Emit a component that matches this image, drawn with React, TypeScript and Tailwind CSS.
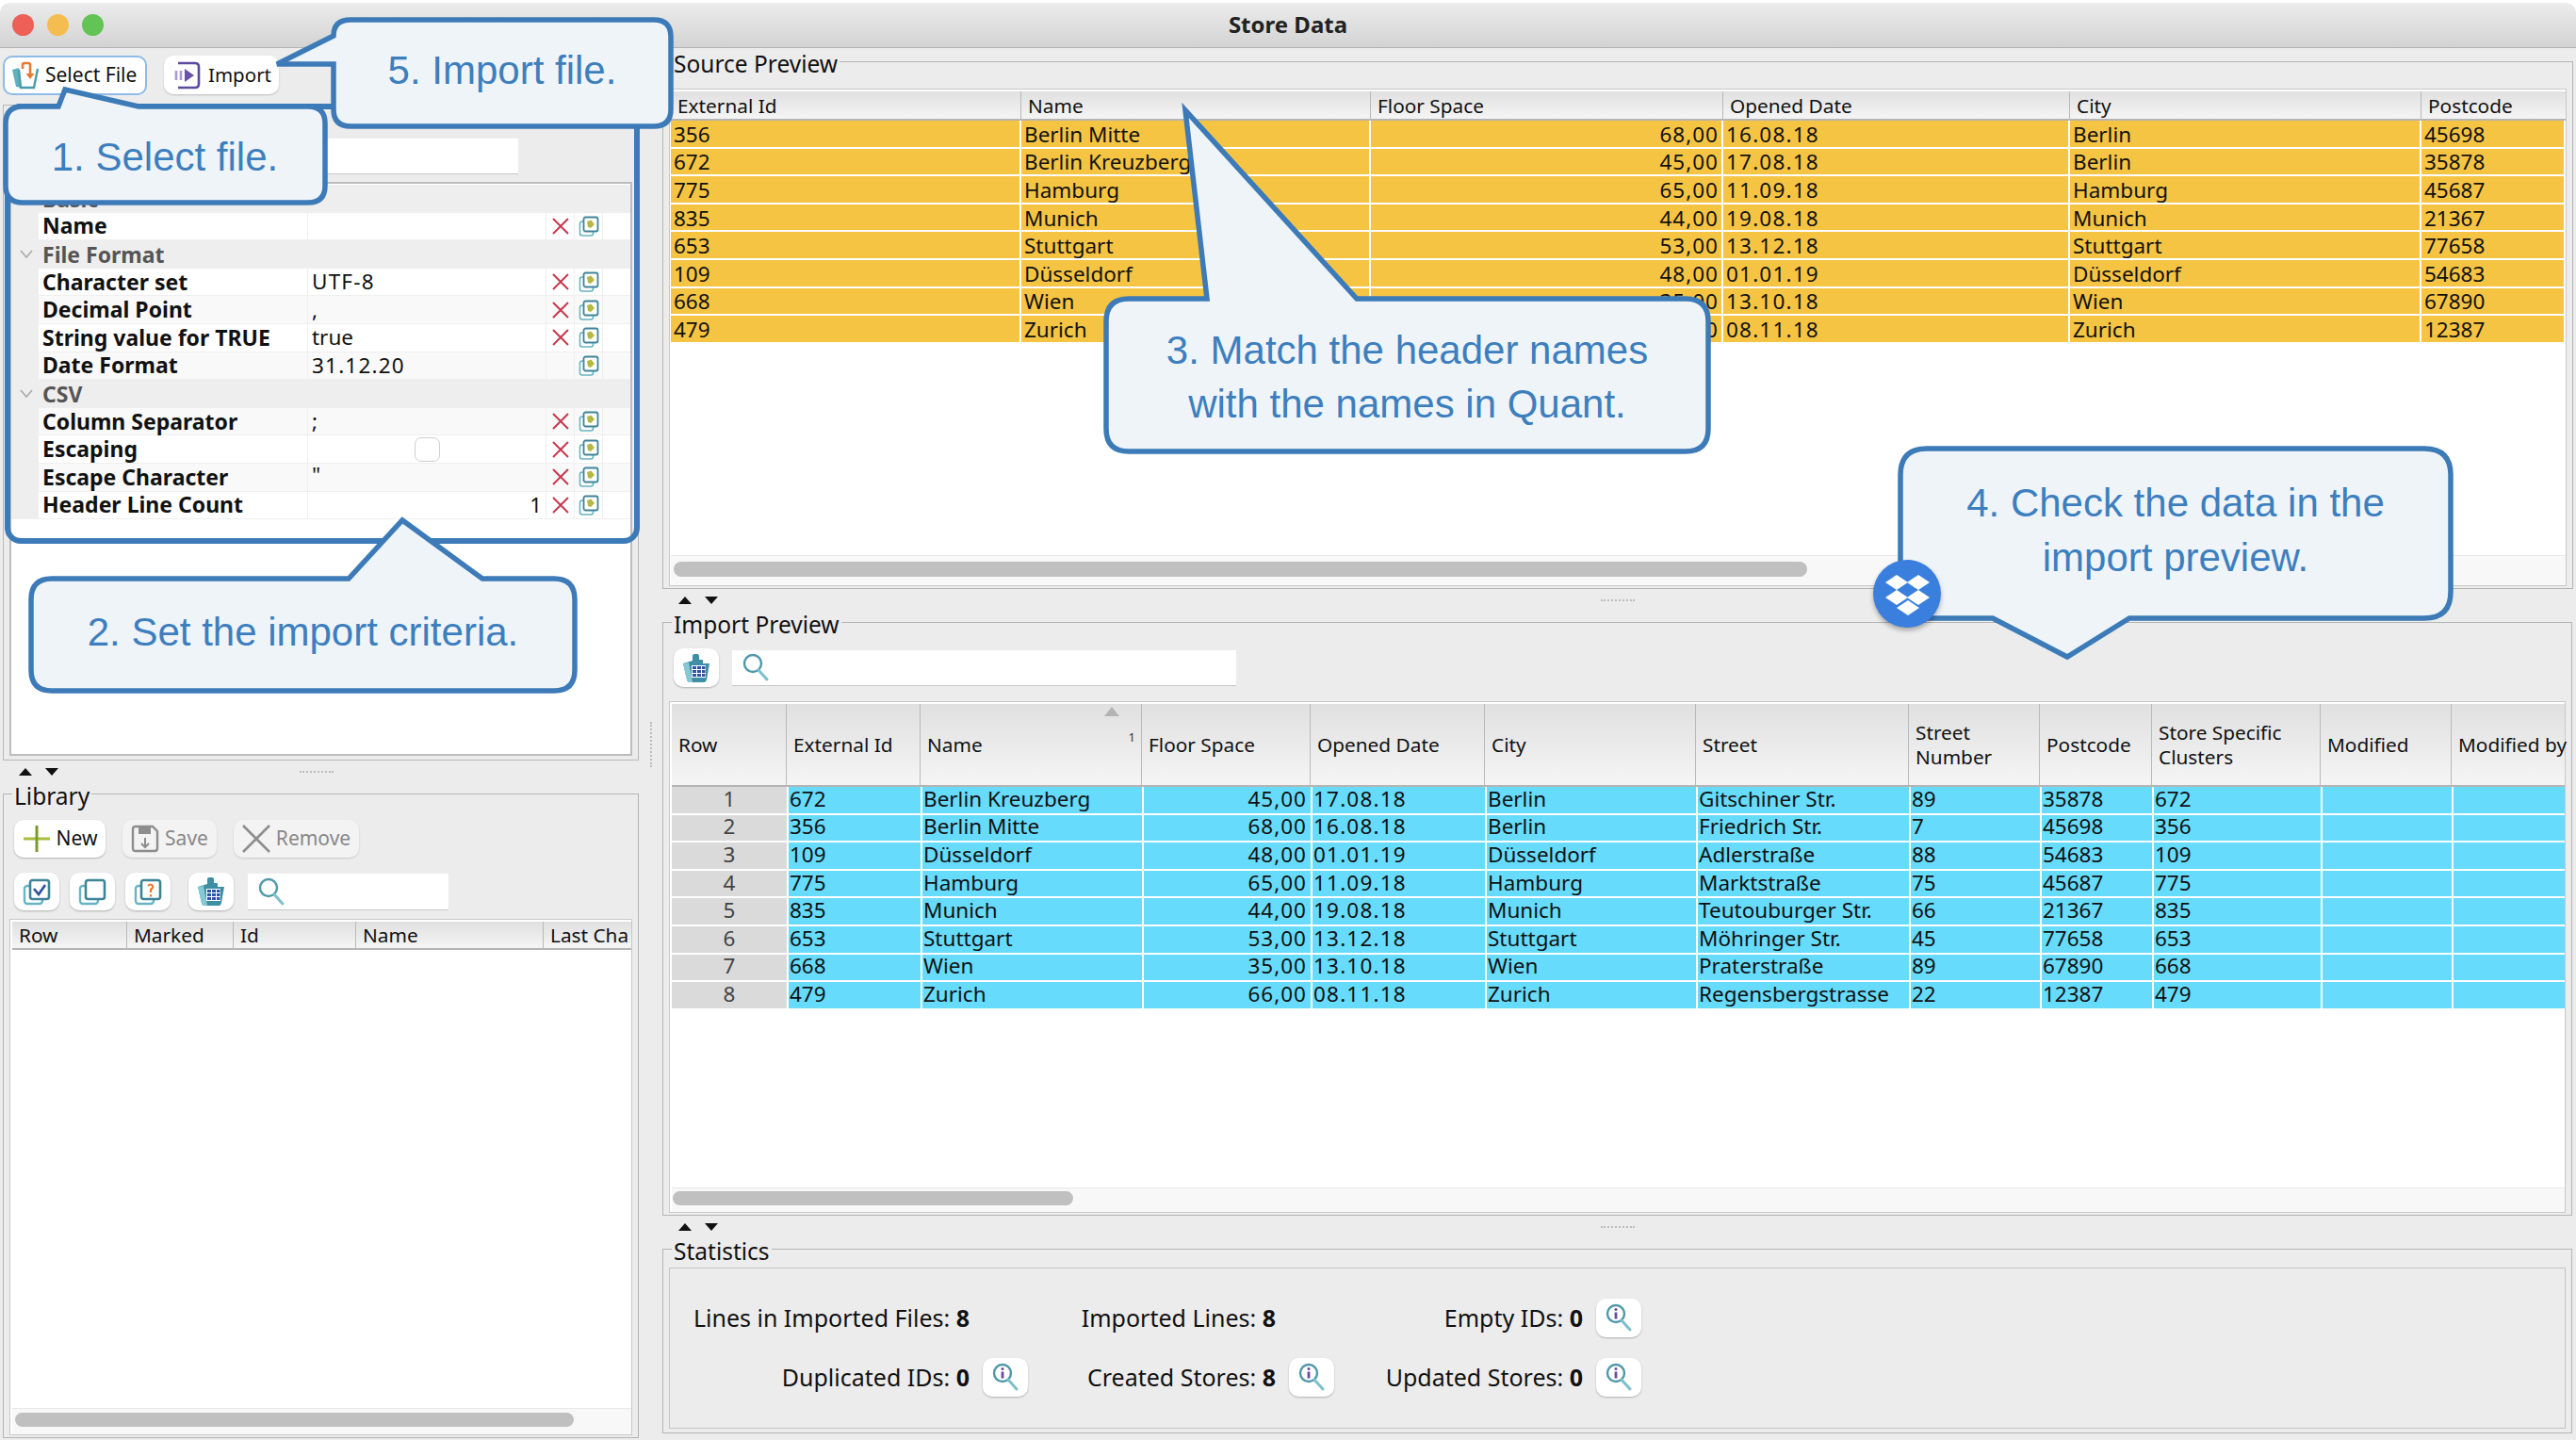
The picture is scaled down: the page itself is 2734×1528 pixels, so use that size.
import type { ReactNode } from "react";

const srcCols = "grid grid-cols-[372px_371px_374px_368px_373px_153px]";
const impCols = "grid grid-cols-[122px_142px_235px_179px_185px_224px_226px_139px_119px_179px_139px_120px]";
const libCols = "grid grid-cols-[122px_113px_130px_199px_92px]";
const headBg = "bg-gradient-to-b from-[#e0e0e0] to-[#f5f5f5]";

const sourceRows = [
  ["356", "Berlin Mitte", "68,00", "16.08.18", "Berlin", "45698"],
  ["672", "Berlin Kreuzberg", "45,00", "17.08.18", "Berlin", "35878"],
  ["775", "Hamburg", "65,00", "11.09.18", "Hamburg", "45687"],
  ["835", "Munich", "44,00", "19.08.18", "Munich", "21367"],
  ["653", "Stuttgart", "53,00", "13.12.18", "Stuttgart", "77658"],
  ["109", "Düsseldorf", "48,00", "01.01.19", "Düsseldorf", "54683"],
  ["668", "Wien", "35,00", "13.10.18", "Wien", "67890"],
  ["479", "Zurich", "66,00", "08.11.18", "Zurich", "12387"],
];

const importRows = [
  ["672", "Berlin Kreuzberg", "45,00", "17.08.18", "Berlin", "Gitschiner Str.", "89", "35878", "672"],
  ["356", "Berlin Mitte", "68,00", "16.08.18", "Berlin", "Friedrich Str.", "7", "45698", "356"],
  ["109", "Düsseldorf", "48,00", "01.01.19", "Düsseldorf", "Adlerstraße", "88", "54683", "109"],
  ["775", "Hamburg", "65,00", "11.09.18", "Hamburg", "Marktstraße", "75", "45687", "775"],
  ["835", "Munich", "44,00", "19.08.18", "Munich", "Teutouburger Str.", "66", "21367", "835"],
  ["653", "Stuttgart", "53,00", "13.12.18", "Stuttgart", "Möhringer Str.", "45", "77658", "653"],
  ["668", "Wien", "35,00", "13.10.18", "Wien", "Praterstraße", "89", "67890", "668"],
  ["479", "Zurich", "66,00", "08.11.18", "Zurich", "Regensbergstrasse", "22", "12387", "479"],
];

type Prop = { group?: boolean; label: string; value?: string; noX?: boolean; check?: boolean; right?: boolean; top?: boolean; wide?: boolean };

const props: Prop[] = [
  { group: true, label: "Basic" },
  { label: "Name" },
  { group: true, label: "File Format" },
  { label: "Character set", value: "UTF-8", wide: true },
  { label: "Decimal Point", value: "," },
  { label: "String value for TRUE", value: "true" },
  { label: "Date Format", value: "31.12.20", noX: true, wide: true },
  { group: true, label: "CSV" },
  { label: "Column Separator", value: ";" },
  { label: "Escaping", check: true },
  { label: "Escape Character", value: '"', top: true },
  { label: "Header Line Count", value: "1", right: true },
];

function Stack({ children }: { children?: ReactNode }) {
  return (
    <svg viewBox="0 0 30 30" className="h-[30px] w-[30px]" fill="none">
      <rect x="2" y="9" width="19" height="19" rx="3" stroke="#68b4c2" strokeWidth="2.4" fill="#fff" />
      <rect x="8" y="3" width="20" height="20" rx="2.5" stroke="#3f8397" strokeWidth="2.6" fill="#fff" />
      {children}
    </svg>
  );
}

function TableBag() {
  return (
    <svg viewBox="0 0 30 32" className="h-[32px] w-[30px]">
      <path d="M1 11 L11 8 V3 q0-2 2-2 h3 q2 0 2 2 V7 h3 q1 0 1 1 v3 h7 l-3 17 q-.5 3-3 3 H8 q-2.5 0-3-3 Z" fill="#3f8fa4" />
      <path d="M1 11 L7 10 L11 31 H8 q-2.5 0-3-3 Z" fill="#86c9d4" />
      <path d="M10 13 h15 v13 h-15 Z" fill="#fff" />
      <path d="M11 14 h4 v3 h-4 Z M16 14 h4 v3 h-4 Z M21 14 h3.5 v3 h-3.5 Z M11 18 h4 v3 h-4 Z M16 18 h4 v3 h-4 Z M21 18 h3.5 v3 h-3.5 Z M11 22 h4 v3 h-4 Z M16 22 h4 v3 h-4 Z M21 22 h3.5 v3 h-3.5 Z" fill="#2e55a5" />
    </svg>
  );
}

function Magnifier({ info }: { info?: boolean }) {
  return (
    <svg viewBox="0 0 30 30" className="h-[30px] w-[30px]" fill="none">
      <circle cx="12" cy="11" r="9" stroke="#4f98aa" strokeWidth="2.4" />
      <path d="M18 18 L27 28" stroke="#7dbfcb" strokeWidth="3" strokeLinecap="round" />
      {info && (
        <>
          <circle cx="12" cy="6.5" r="1.5" fill="#6a4a9c" />
          <rect x="10.6" y="9.5" width="2.8" height="7" fill="#6a4a9c" />
        </>
      )}
    </svg>
  );
}

function SmallCopy() {
  return (
    <svg viewBox="0 0 22 22" className="h-[22px] w-[22px]" fill="none">
      <rect x="1.5" y="6" width="14" height="15" rx="2.5" stroke="#68b4c2" strokeWidth="1.6" fill="#fff" />
      <rect x="5.5" y="1.5" width="15" height="15" rx="2" stroke="#3f8397" strokeWidth="1.8" fill="#fff" />
      <path d="M9 6 L15 4 L17 9 L13 13 L10 12 Z" fill="#b5b844" />
      <path d="M13 4 h4 v5 Z" fill="#fff" />
    </svg>
  );
}

function RedX() {
  return (
    <svg viewBox="0 0 18 18" className="h-[18px] w-[18px]" fill="none">
      <path d="M1 1 L17 17 M17 1 L1 17" stroke="#c8384d" strokeWidth="2" />
    </svg>
  );
}

function IconButton({ children, className = "" }: { children: ReactNode; className?: string }) {
  return (
    <button className={`flex h-[40px] w-[48px] shrink-0 items-center justify-center rounded-[10px] bg-white shadow-[0_1px_2px_rgba(0,0,0,0.25)] ${className}`}>
      {children}
    </button>
  );
}

function SplitHandle({ dots }: { dots: string }) {
  return (
    <div className="flex h-[23px] items-center">
      <svg viewBox="0 0 44 10" className="ml-[17px] h-[10px] w-[44px]">
        <polygon points="0,9 7,1 14,9" fill="#111" />
        <polygon points="28,1 42,1 35,9" fill="#111" />
      </svg>
      <span className={`h-[2px] border-t-2 border-dotted border-[#bcbcbc] ${dots}`} />
    </div>
  );
}

function Legend({ children }: { children: ReactNode }) {
  return <legend className="ml-[3px] h-[24px] translate-y-[3px] px-[2px] text-[24.5px] leading-[24px] text-[#111]">{children}</legend>;
}

function HeadCell({ children, last }: { children?: ReactNode; last?: boolean }) {
  return (
    <div className={`flex items-center whitespace-nowrap px-[7px] ${last ? "" : "border-r border-[#b9b9b9]"}`}>{children}</div>
  );
}

function PropertyRow({ p, i }: { p: Prop; i: number }) {
  if (p.group) {
    return (
      <div className="flex h-[29.6px] items-center bg-[#eeeeee] text-[23px] font-bold leading-[24px] text-[#555]">
        <svg viewBox="0 0 14 10" className="ml-[9px] mr-[10px] h-[10px] w-[14px]" fill="none">
          <path d="M1 1 L7 8 L13 1" stroke="#a8a8a8" strokeWidth="1.6" />
        </svg>
        {p.label}
      </div>
    );
  }
  return (
    <div className={`grid h-[29.6px] grid-cols-[29px_286px_253px_30px_30px_28px] border-b border-[#efefef] leading-[24px] ${i % 2 ? "bg-white" : "bg-[#f9f9f9]"}`}>
      <div className="bg-[#eeeeee]" />
      <div className="flex items-center whitespace-nowrap border-r border-[#eeeeee] pb-[1px] pl-[4px] text-[23px] font-bold text-[#111]">{p.label}</div>
      <div className={`flex border-r border-[#eeeeee] px-[4px] text-[#111] ${p.top ? "items-start" : "items-center"} ${p.right ? "justify-end" : ""} ${p.check ? "justify-center" : ""} ${p.wide ? "tracking-[1.2px]" : ""}`}>
        {p.check ? <span className="h-[26px] w-[27px] rounded-[7px] border border-[#cfcfcf] bg-white" /> : p.value}
      </div>
      <div className="flex items-center justify-center border-r border-[#eeeeee]">{!p.noX && <RedX />}</div>
      <div className="flex items-center justify-center border-r border-[#eeeeee]">
        <SmallCopy />
      </div>
    </div>
  );
}

function Stat({ label, value, info }: { label: string; value: string; info?: boolean }) {
  return (
    <div className="flex h-[41px] items-center justify-end gap-[14px]">
      <span className="whitespace-nowrap text-[25px] leading-[30px] text-[#111]">
        {label}: <b>{value}</b>
      </span>
      {info ? (
        <IconButton className="h-[41px]">
          <Magnifier info />
        </IconButton>
      ) : (
        <span className="w-[48px]" />
      )}
    </div>
  );
}

function Callouts() {
  return (
    <>
      <svg viewBox="0 0 2734 1528" className="pointer-events-none absolute left-0 top-0 h-[1528px] w-[2734px]" fill="none" strokeLinejoin="miter">
        <rect x="8" y="113" width="668" height="461" rx="14" stroke="#3c7ab8" strokeWidth="6" />
        <g fill="#eff4f9" stroke="#3c7ab8" strokeWidth="5.5">
          <path d="M24 113 H62 L69 95 L147 113 H327 Q345 113 345 131 V197 Q345 215 327 215 H24 Q6 215 6 197 V131 Q6 113 24 113 Z" />
          <path d="M372 21 H694 Q712 21 712 39 V116 Q712 134 694 134 H372 Q354 134 354 116 V68 H294 L354 38 Q354 21 372 21 Z" />
          <path d="M55 614 H370 L427 552 L512 614 H588 Q610 614 610 636 V711 Q610 733 588 733 H55 Q33 733 33 711 V636 Q33 614 55 614 Z" />
          <path d="M1198 317 H1281 L1258 117 L1440 317 H1789 Q1813 317 1813 341 V455 Q1813 479 1789 479 H1198 Q1174 479 1174 455 V341 Q1174 317 1198 317 Z" />
          <path d="M2045 476 H2573 Q2601 476 2601 504 V628 Q2601 656 2573 656 H2260 L2194 697 L2115 656 H2045 Q2017 656 2017 628 V504 Q2017 476 2045 476 Z" />
        </g>
      </svg>
      <div className="absolute left-[5px] top-[115px] flex h-[103px] w-[340px] items-center justify-center text-[42px] text-[#3d7fbe] font-['Liberation_Sans',sans-serif]">1. Select file.</div>
      <div className="absolute left-[354px] top-[18px] flex h-[113px] w-[358px] items-center justify-center text-[42px] text-[#3d7fbe] font-['Liberation_Sans',sans-serif]">5. Import file.</div>
      <div className="absolute left-[33px] top-[610px] flex h-[120px] w-[577px] items-center justify-center text-[42px] text-[#3d7fbe] font-['Liberation_Sans',sans-serif]">2. Set the import criteria.</div>
      <div className="absolute left-[1174px] top-[315px] flex h-[170px] w-[639px] items-center justify-center text-center text-[42px] leading-[57px] text-[#3d7fbe] font-['Liberation_Sans',sans-serif]">
        3. Match the header names
        <br />
        with the names in Quant.
      </div>
      <div className="absolute left-[2017px] top-[474px] flex h-[178px] w-[584px] items-center justify-center text-center text-[42px] leading-[58px] text-[#3d7fbe] font-['Liberation_Sans',sans-serif]">
        4. Check the data in the
        <br />
        import preview.
      </div>
      <div className="absolute left-[1988px] top-[594px] flex h-[72px] w-[72px] items-center justify-center rounded-full bg-[#3a7fde] shadow-[0_3px_5px_rgba(0,0,0,0.3)]">
        <svg viewBox="-24 -24 48 48" className="h-[48px] w-[48px]" fill="#fff">
          <polygon points="-23,-12 -11,-20 1,-12 -11,-4" />
          <polygon points="0,-12 12,-20 24,-12 12,-4" />
          <polygon points="-23,4 -11,-4 1,4 -11,12" />
          <polygon points="0,4 12,-4 24,4 12,12" />
          <polygon points="-11,15 1,7 13,15 1,23" />
        </svg>
      </div>
    </>
  );
}

export default function App() {
  return (
    <div className="relative h-[1528px] w-[2734px] overflow-hidden bg-white pt-[3px] text-[22.5px] font-['Noto_Sans',sans-serif]">
      <header className="grid h-[48px] grid-cols-[1fr_auto_1fr] items-center rounded-t-[10px] border-b border-[#b4b4b4] bg-gradient-to-b from-[#ececec] to-[#d3d3d3]">
        <div className="flex gap-[14px] pl-[13px]">
          <span className="h-[23px] w-[23px] rounded-full bg-[#ed5f57]" />
          <span className="h-[23px] w-[23px] rounded-full bg-[#f5bd4f]" />
          <span className="h-[23px] w-[23px] rounded-full bg-[#61c454]" />
        </div>
        <div className="pb-[2px] text-[24px] font-bold text-[#222]">Store Data</div>
        <div />
      </header>

      <main className="flex h-[1477px] bg-[#ececec]">
        {/* left side */}
        <div className="ml-[3px] w-[675px] shrink-0">
          <div className="flex h-[60px] items-start gap-[18px] pt-[8px] text-[#111]">
            <button className="flex h-[42px] w-[153px] items-center gap-[6px] whitespace-nowrap rounded-[10px] border-2 border-[#8fbbe8] bg-white pl-[7px] text-[21px]">
              <svg viewBox="0 0 30 30" className="h-[30px] w-[30px] shrink-0" fill="none">
                <path d="M1 9 L8 7 L10 28 L5 27 Z" fill="#5fb0bf" />
                <path d="M8 9 L10 28 H24 L28 8" stroke="#4a9cac" strokeWidth="2.4" />
                <path d="M12 8 V4 q0-2 2-2 h4 q2 0 2 2 V14" stroke="#e67a2e" strokeWidth="2.6" />
                <path d="M15.5 13 L20 19 L24.5 13 Z" fill="#e67a2e" />
              </svg>
              Select File
            </button>
            <button className="flex h-[41px] w-[122px] items-center gap-[8px] rounded-[10px] bg-white pl-[9px] text-[20.5px] shadow-[0_1px_2px_rgba(0,0,0,0.2)]">
              <svg viewBox="0 0 30 30" className="h-[30px] w-[30px] shrink-0" fill="none">
                <path d="M6 2 H24 q4 0 4 4 V24 q0 4-4 4 H6" stroke="#5b4a9e" strokeWidth="2.6" />
                <path d="M4 10 V20 M9 10 V20" stroke="#a99bd2" strokeWidth="2.6" />
                <path d="M13 8 L23 15 L13 22 Z" fill="#6a52a8" />
              </svg>
              Import
            </button>
          </div>

          <section className="h-[696px] border border-[#b8b8b8] px-[6px] pb-[3px]">
            <div className="flex h-[81px] items-end pb-[8px]">
              <div className="h-[38px] w-[540px] border-b border-[#c8c8c8] bg-white" />
            </div>
            <div className="h-[609px] border-2 border-[#bcbcbc] bg-white pt-[1px]">
              {props.map((p, i) => (
                <PropertyRow key={p.label} p={p} i={i} />
              ))}
            </div>
          </section>

          <SplitHandle dots="ml-[254px] w-[36px]" />

          <fieldset className="h-[696px] border border-[#b5b5b5] px-[6px] pb-[2px]">
            <Legend>Library</Legend>
            <div className="flex gap-[18px] pl-[5px] pt-[16px] text-[21px]">
              <button className="flex h-[40px] w-[97px] items-center justify-center gap-[6px] rounded-[10px] bg-white text-[#111] shadow-[0_1px_2px_rgba(0,0,0,0.25)]">
                <svg viewBox="0 0 30 30" className="h-[30px] w-[30px]">
                  <rect x="1" y="13.5" width="28" height="3" fill="#a8bb3a" />
                  <rect x="13.5" y="1" width="3" height="28" fill="#7d9a2c" />
                </svg>
                New
              </button>
              <button className="flex h-[40px] w-[100px] items-center justify-center gap-[6px] rounded-[10px] bg-[#f3f3f3] text-[#888] shadow-[0_1px_2px_rgba(0,0,0,0.15)]">
                <svg viewBox="0 0 30 30" className="h-[30px] w-[30px]" fill="none">
                  <path d="M2 5 q0-3 3-3 H23 L28 7 V25 q0 3-3 3 H5 q-3 0-3-3 Z" stroke="#8d8d8d" strokeWidth="2.4" />
                  <rect x="8" y="2" width="13" height="8" fill="#8d8d8d" />
                  <path d="M15 14 V24 M11 20 L15 24 L19 20" stroke="#8d8d8d" strokeWidth="2" />
                </svg>
                Save
              </button>
              <button className="flex h-[40px] w-[133px] items-center justify-center gap-[6px] rounded-[10px] bg-[#f3f3f3] text-[#888] shadow-[0_1px_2px_rgba(0,0,0,0.15)]">
                <svg viewBox="0 0 30 30" className="h-[30px] w-[30px]" fill="none">
                  <path d="M1 1 L29 29 M29 1 L1 29" stroke="#8d8d8d" strokeWidth="2.6" />
                </svg>
                Remove
              </button>
            </div>
            <div className="mt-[16px] flex items-center gap-[11px] pl-[5px]">
              <IconButton>
                <Stack>
                  <path d="M12 12 L17 18 L24 8" stroke="#2f4f9f" strokeWidth="2.6" />
                </Stack>
              </IconButton>
              <IconButton>
                <Stack />
              </IconButton>
              <IconButton>
                <Stack>
                  <path d="M15 9 q3-3 5 0 q1 2-2 4 v3 M18 18 v2.5" stroke="#e67a2e" strokeWidth="2.2" />
                </Stack>
              </IconButton>
              <IconButton className="ml-[8px]">
                <TableBag />
              </IconButton>
              <div className="ml-[4px] flex h-[39px] w-[213px] items-center border-b border-[#c8c8c8] bg-white pl-[10px]">
                <Magnifier />
              </div>
            </div>
            <div className="mt-[9px] flex h-[548px] flex-col border border-[#c8c8c8] bg-white pl-[2px] pt-[2px]">
              <div className={`${libCols} h-[30px] border-b-2 border-[#b5b5b5] ${headBg} text-[20.8px] leading-[24px] text-[#111]`}>
                <HeadCell>Row</HeadCell>
                <HeadCell>Marked</HeadCell>
                <HeadCell>Id</HeadCell>
                <HeadCell>Name</HeadCell>
                <HeadCell last>Last Cha</HeadCell>
              </div>
              <div className="flex-1" />
              <div className="flex h-[28px] items-center border-t border-[#e8e8e8] bg-[#f8f8f8] pb-[5px] pl-[3px]">
                <div className="h-[15px] w-[593px] rounded-full bg-[#c0c0c0]" />
              </div>
            </div>
          </fieldset>
        </div>

        <div className="flex w-[25px] shrink-0 items-center justify-center">
          <span className="h-[48px] w-[2px] border-l-2 border-dotted border-[#bcbcbc]" />
        </div>

        {/* right side */}
        <div className="w-[2026px] shrink-0 pt-[2px]">
          <fieldset className="h-[572px] border border-[#b5b5b5] px-[6px] pb-[2px]">
            <Legend>Source Preview</Legend>
            <div className="mt-[17px] flex h-[528px] flex-col border border-[#c8c8c8] bg-white pl-[1px] pt-[2px]">
              <div className={`${srcCols} h-[31px] border-b-2 border-[#b5b5b5] ${headBg} text-[20.8px] leading-[24px] text-[#111]`}>
                {["External Id", "Name", "Floor Space", "Opened Date", "City", "Postcode"].map((h, i) => (
                  <HeadCell key={h} last={i === 5}>
                    {h}
                  </HeadCell>
                ))}
              </div>
              {sourceRows.map((r) => (
                <div key={r[0]} className={`${srcCols} h-[29.6px] border-b-2 border-white bg-[#f6c443] leading-[24px] text-[#111]`}>
                  {r.map((c, i) => (
                    <div
                      key={i}
                      className={`flex items-center whitespace-nowrap border-r-2 border-white px-[3px] pt-[2px] ${i === 2 ? "justify-end tracking-[1px]" : ""} ${i === 3 ? "tracking-[1.2px]" : ""}`}
                    >
                      {c}
                    </div>
                  ))}
                </div>
              ))}
              <div className="flex-1" />
              <div className="flex h-[32px] items-center border-t border-[#e8e8e8] bg-[#f8f8f8] pb-[3px] pl-[3px]">
                <div className="h-[16px] w-[1203px] rounded-full bg-[#c0c0c0]" />
              </div>
            </div>
          </fieldset>

          <SplitHandle dots="ml-[935px] w-[36px]" />

          <fieldset className="h-[642px] border border-[#b5b5b5] px-[6px] pb-[2px]">
            <Legend>Import Preview</Legend>
            <div className="flex items-center gap-[14px] pt-[16px]">
              <IconButton className="ml-[5px] h-[41px]">
                <TableBag />
              </IconButton>
              <div className="flex h-[38px] w-[535px] items-center border-b border-[#c8c8c8] bg-white pl-[10px]">
                <Magnifier />
              </div>
            </div>
            <div className="mt-[15px] flex h-[543px] flex-col border border-[#c8c8c8] bg-white pl-[2px] pt-[2px]">
              <div className={`${impCols} h-[88px] border-b-2 border-[#b5b5b5] ${headBg} text-[20.8px] leading-[26px] text-[#111]`}>
                <HeadCell>Row</HeadCell>
                <HeadCell>External Id</HeadCell>
                <div className="relative flex items-center border-r border-[#b9b9b9] px-[7px]">
                  Name
                  <svg viewBox="0 0 16 10" className="absolute left-[195px] top-[3px] h-[10px] w-[16px]">
                    <polygon points="0,10 8,0 16,10" fill="#b4b4b4" />
                  </svg>
                  <span className="absolute right-[6px] top-[27px] text-[13px] leading-[16px] text-[#333]">1</span>
                </div>
                <HeadCell>Floor Space</HeadCell>
                <HeadCell>Opened Date</HeadCell>
                <HeadCell>City</HeadCell>
                <HeadCell>Street</HeadCell>
                <HeadCell>
                  <span className="whitespace-normal">Street Number</span>
                </HeadCell>
                <HeadCell>Postcode</HeadCell>
                <HeadCell>
                  <span className="whitespace-normal">Store Specific Clusters</span>
                </HeadCell>
                <HeadCell>Modified</HeadCell>
                <HeadCell last>Modified by</HeadCell>
              </div>
              <div>
                {importRows.map((r, n) => (
                  <div key={r[0]} className={`${impCols} h-[29.6px] border-b-2 border-white bg-[#66dbfb] leading-[24px] text-[#111]`}>
                    <div className="flex items-center justify-center bg-[#dadada] pb-[2px] text-[#444]">{n + 1}</div>
                    {r.map((c, i) => (
                      <div
                        key={i}
                        className={`flex items-center whitespace-nowrap border-l-2 border-white pb-[2px] pl-[1px] pr-[4px] ${i === 2 ? "justify-end tracking-[1px]" : ""} ${i === 3 ? "tracking-[1.2px]" : ""}`}
                      >
                        {c}
                      </div>
                    ))}
                    <div className="border-l-2 border-white" />
                    <div className="border-l-2 border-white" />
                  </div>
                ))}
              </div>
              <div className="flex-1" />
              <div className="flex h-[26px] items-center border-t border-[#e8e8e8] bg-[#f8f8f8] pb-[4px] pl-[1px]">
                <div className="h-[15px] w-[425px] rounded-full bg-[#c0c0c0]" />
              </div>
            </div>
          </fieldset>

          <SplitHandle dots="ml-[935px] w-[36px]" />

          <fieldset className="h-[208px] border border-[#b5b5b5] px-[6px] pb-[4px]">
            <Legend>Statistics</Legend>
            <div className="mt-[8px] grid h-[171px] grid-cols-[380px_325px_326px] content-center gap-y-[22px] border border-[#c4c4c4] pb-[2px] pr-[980px]">
              <Stat label="Lines in Imported Files" value="8" />
              <Stat label="Imported Lines" value="8" />
              <Stat label="Empty IDs" value="0" info />
              <Stat label="Duplicated IDs" value="0" info />
              <Stat label="Created Stores" value="8" info />
              <Stat label="Updated Stores" value="0" info />
            </div>
          </fieldset>
        </div>
      </main>

      <Callouts />
    </div>
  );
}
